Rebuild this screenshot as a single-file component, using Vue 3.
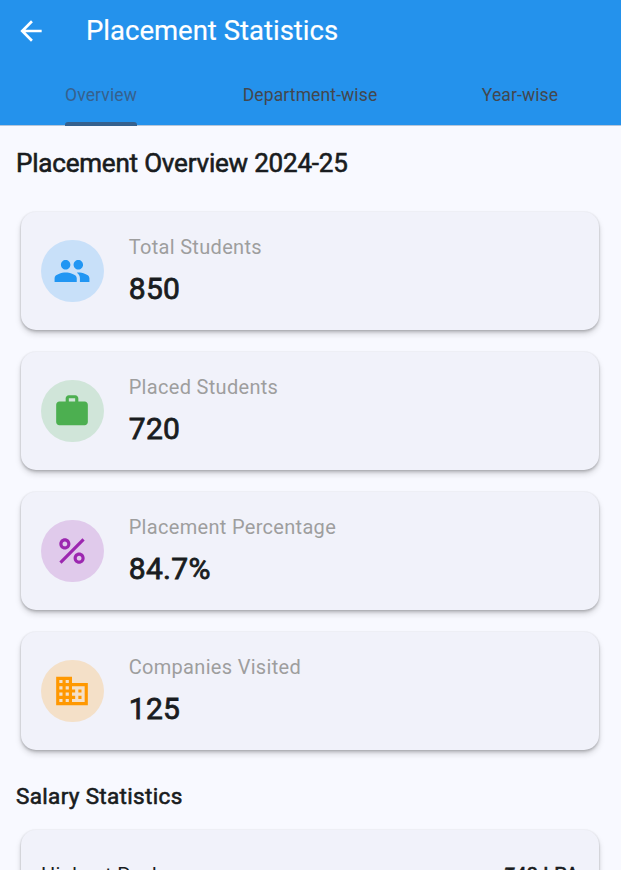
<script setup>
const tabs = ['Overview', 'Department-wise', 'Year-wise']
const stats = [
  {
    label: 'Total Students', value: '850', tone: 'blue',
    icon: 'M16 11c1.66 0 2.99-1.34 2.99-3S17.66 5 16 5s-3 1.34-3 3 1.34 3 3 3zm-8 0c1.66 0 2.99-1.34 2.99-3S9.66 5 8 5 5 6.34 5 8s1.34 3 3 3zm0 2c-2.33 0-7 1.17-7 3.5V19h14v-2.500c0-2.330-4.670-3.500-7-3.500zm8 0c-.29 0-.62.02-.97.050 1.160.840 1.970 1.970 1.970 3.450V19h6v-2.500c0-2.330-4.670-3.500-7-3.500z',
  },
  {
    label: 'Placed Students', value: '720', tone: 'green',
    icon: 'M20 6h-4V4c0-1.110-.89-2-2-2h-4c-1.110 0-2 .89-2 2v2H4c-1.110 0-1.990.89-1.990 2L2 19c0 1.110.89 2 2 2h16c1.110 0 2-.89 2-2V8c0-1.110-.89-2-2-2zm-6 0h-4V4h4v2z',
  },
  {
    label: 'Placement Percentage', value: '84.7%', tone: 'purple',
    icon: 'M7.500 4C5.570 4 4 5.570 4 7.500S5.570 11 7.500 11 11 9.430 11 7.500 9.430 4 7.500 4zm0 5C6.670 9 6 8.330 6 7.500S6.670 6 7.500 6 9 6.670 9 7.500 8.330 9 7.500 9zM16.500 13c-1.930 0-3.500 1.570-3.500 3.500s1.570 3.500 3.500 3.500 3.500-1.570 3.500-3.500-1.570-3.500-3.500-3.500zm0 5c-.83 0-1.500-.67-1.500-1.500s.67-1.500 1.500-1.500 1.500.67 1.500 1.500-.67 1.500-1.500 1.500zM5.410 20L4 18.590 18.590 4 20 5.410z',
  },
  {
    label: 'Companies Visited', value: '125', tone: 'orange',
    icon: 'M12 7V3H2v18h20V7H12zM6 19H4v-2h2v2zm0-4H4v-2h2v2zm0-4H4V9h2v2zm0-4H4V5h2v2zm4 12H8v-2h2v2zm0-4H8v-2h2v2zm0-4H8V9h2v2zm0-4H8V5h2v2zm10 12h-8v-2h2v-2h-2v-2h2v-2h-2V9h8v10zm-2-8h-2v2h2v-2zm0 4h-2v2h2v-2z',
  },
]
</script>

<template>
  <div class="screen">
    <header class="appbar">
      <div class="toolbar">
        <svg class="back" viewBox="0 0 24 24"><path d="M20 11H7.830l5.590-5.590L12 4l-8 8 8 8 1.410-1.410L7.830 13H20v-2z" /></svg>
        <h1>Placement Statistics</h1>
      </div>
      <nav class="tabs">
        <div v-for="(tab, i) in tabs" :key="tab" class="tab">
          <span class="tab-label" :class="{ active: i === 0 }">{{ tab }}</span>
        </div>
      </nav>
    </header>
    <main>
      <h2>Placement Overview 2024-25</h2>
      <section class="cards">
        <article v-for="s in stats" :key="s.label" class="card">
          <div class="badge" :class="s.tone">
            <svg viewBox="0 0 24 24"><path :d="s.icon" /></svg>
          </div>
          <div class="info">
            <div class="label">{{ s.label }}</div>
            <div class="value">{{ s.value }}</div>
          </div>
        </article>
      </section>
      <h3>Salary Statistics</h3>
      <section class="card salary">
        <span>Highest Package</span>
        <span class="amount">₹42 LPA</span>
      </section>
    </main>
  </div>
</template>

<style>
body { margin: 0; overflow: hidden; }
</style>

<style scoped>
.screen {
  width: 100%;
  height: 870px;
  overflow: hidden;
  box-sizing: border-box;
  background: #f8f9ff;
  color: #191c20;
  font-family: Roboto, sans-serif;
}
h1, h2, h3 { margin: 0; font-weight: 400; white-space: nowrap; }
.appbar {
  height: 126px;
  box-sizing: border-box;
  background: #2492ec;
  border-bottom: 1px solid #b5c6da;
}
.toolbar {
  display: flex;
  align-items: center;
  height: 62px;
  padding-left: 15px;
  gap: 39px;
  color: #fff;
}
.back { width: 32px; height: 32px; fill: #fff; }
h1 { font-size: 27.5px; line-height: 34px; -webkit-text-stroke: 0.2px #fff; }
.tabs { display: grid; grid-template-columns: 201px 218px 1fr; height: 64px; }
.tab { display: flex; justify-content: center; }
.tab-label {
  box-sizing: border-box;
  height: 64px;
  line-height: 66px;
  font-size: 17.5px;
  letter-spacing: 0.12px;
  color: #43474e;
  white-space: nowrap;
}
.tab-label.active {
  display: flex;
  flex-direction: column;
  height: 64px;
  margin-left: 1px;
  color: #36618e;
}
.tab-label.active::after {
  content: '';
  flex: none;
  height: 4px;
  margin-top: -6px;
  border-radius: 3px 3px 0 0;
  background: #36618e;
}
main { padding: 0 16px; }
h2 {
  padding-top: 20px;
  font-size: 26px;
  line-height: 34px;
  letter-spacing: -0.2px;
  -webkit-text-stroke: 0.6px #191c20;
}
.cards { display: flex; flex-direction: column; gap: 22px; padding: 32px 6px 0 5px; }
.card {
  display: flex;
  align-items: center;
  box-sizing: border-box;
  height: 118px;
  padding: 0 20px;
  border-radius: 15px;
  background: #f1f2fa;
  box-shadow: 0 0 1px 0.5px rgba(0, 0, 0, 0.03), 0 2px 3px rgba(0, 0, 0, 0.18), 0 4px 6px rgba(0, 0, 0, 0.14);
}
.badge {
  display: flex;
  align-items: center;
  justify-content: center;
  width: 62.500px;
  height: 62.500px;
  border-radius: 50%;
}
.badge svg { width: 38px; height: 38px; fill: currentColor; }
.blue { color: #2196f3; background: #c8e0f9; }
.green { color: #4caf50; background: #d0e5d9; }
.purple { color: #9c27b0; background: #e0caeb; }
.orange { color: #ff9800; background: #f4e0c8; }
.info { margin-left: 25.200px; }
.label { padding-top: 1px; font-size: 20px; line-height: 30px; letter-spacing: 0.310px; color: #9e9e9e; }
.value { margin-top: 4px; font-size: 30px; line-height: 45px; letter-spacing: 0.350px; -webkit-text-stroke: 0.8px #191c20; }
h3 {
  padding-top: 31px;
  font-size: 22.500px;
  line-height: 30px;
  letter-spacing: 0.330px;
  -webkit-text-stroke: 0.6px #191c20;
}
.salary {
  align-items: flex-start;
  justify-content: space-between;
  margin: 19px 6px 0 5px;
  padding-top: 30px;
  font-size: 20px;
  line-height: 30px;
  letter-spacing: 0.310px;
}
.amount { letter-spacing: 0.200px; -webkit-text-stroke: 0.6px #191c20; }
</style>
